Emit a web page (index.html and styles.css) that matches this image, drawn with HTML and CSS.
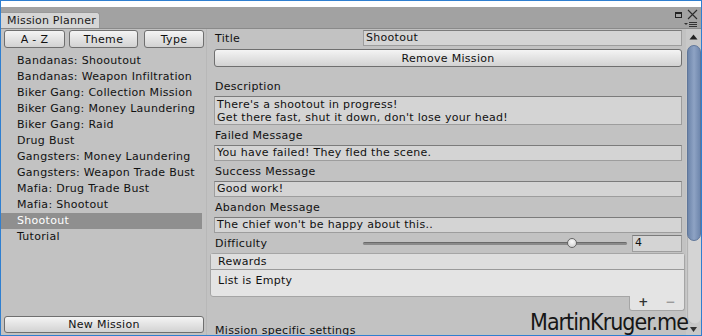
FILE: index.html
```html
<!DOCTYPE html>
<html lang="en">
<head>
    <meta charset="UTF-8">
    <meta name="viewport" content="width=device-width, initial-scale=1.0">
    <title>Mission Planner</title>
    <link rel="stylesheet" href="styles.css">
</head>
<body>
    <div class="window">
        <div class="top-band"></div>
        <div class="header">
            <div class="tab">Mission Planner</div>
            <div class="header-icons">
                <div class="icon-row">
                    <span class="max-icon"></span>
                    <svg width="11" height="11" viewBox="0 0 11 11"><path d="M1 1 L10 10 M10 1 L1 10" stroke="#2b2b2b" stroke-width="1.1" fill="none"/></svg>
                </div>
                <svg class="menu-icon" width="14" height="7" viewBox="0 0 14 7"><path d="M0 2 L4 2 L2 4 Z" fill="#333"/><path d="M5 1.5 H13 M5 3.5 H13 M5 5.5 H13" stroke="#333" stroke-width="1" fill="none"/></svg>
            </div>
        </div>
        <div class="body">
            <div class="left">
                <div class="sort-row">
                    <button class="btn sort-az">A - Z</button>
                    <button class="btn sort-theme">Theme</button>
                    <button class="btn sort-type">Type</button>
                </div>
                <ul class="mission-list">
                    <li>Bandanas: Shooutout</li>
                    <li>Bandanas: Weapon Infiltration</li>
                    <li>Biker Gang: Collection Mission</li>
                    <li>Biker Gang: Money Laundering</li>
                    <li>Biker Gang: Raid</li>
                    <li>Drug Bust</li>
                    <li>Gangsters: Money Laundering</li>
                    <li>Gangsters: Weapon Trade Bust</li>
                    <li>Mafia: Drug Trade Bust</li>
                    <li>Mafia: Shootout</li>
                    <li class="selected">Shootout</li>
                    <li>Tutorial</li>
                </ul>
                <button class="btn new-mission">New Mission</button>
            </div>
            <div class="right">
                <div class="field-row title-row">
                    <span class="label">Title</span>
                    <div class="field">Shootout</div>
                </div>
                <button class="btn remove-btn">Remove Mission</button>
                <div class="label-row desc-label">Description</div>
                <div class="field area">There's a shootout in progress!<br>Get there fast, shut it down, don't lose your head!</div>
                <div class="label-row">Failed Message</div>
                <div class="field">You have failed! They fled the scene.</div>
                <div class="label-row">Success Message</div>
                <div class="field">Good work!</div>
                <div class="label-row">Abandon Message</div>
                <div class="field">The chief won't be happy about this..</div>
                <div class="field-row difficulty-row">
                    <span class="label">Difficulty</span>
                    <div class="slider">
                        <div class="track"></div>
                        <div class="thumb"></div>
                    </div>
                    <div class="field number">4</div>
                </div>
                <div class="rewards">
                    <div class="rewards-head">Rewards</div>
                    <div class="rewards-body">List is Empty</div>
                </div>
                <div class="rewards-foot"><span>+</span><span class="minus">&minus;</span></div>
                <div class="label-row specific">Mission specific settings</div>
            </div>
            <div class="scrollbar">
                <svg class="arrow" width="9" height="6" viewBox="0 0 9 6"><path d="M0.5 5.5 L4.5 0.5 L8.5 5.5 Z" fill="#222"/></svg>
                <div class="scroll-track">
                    <div class="scroll-thumb"></div>
                </div>
                <svg class="arrow" width="7" height="5" viewBox="0 0 7 5"><path d="M0 0 L7 0 L3.5 5 Z" fill="#333"/></svg>
            </div>
        </div>
        <div class="watermark">MartinKruger.me</div>
    </div>
</body>
</html>
```
FILE: styles.css
```css
html,body{
    margin:0;
    height:100%;
    width:100%;
    font-family: "DejaVu Sans", Verdana, sans-serif;
    font-size:11px;
    letter-spacing:0.3px;
    color:#111;
}
.window{
    position:relative;
    box-sizing:border-box;
    width:702px;
    height:336px;
    border:1px solid #2f7fd0;
    display:flex;
    flex-direction:column;
    overflow:hidden;
}
.top-band{
    height:6px;
    background-color:#ffffff;
}
.header{
    height:21px;
    background-color:#a2a2a2;
    border-bottom:1px solid #8a8a8a;
    display:flex;
    justify-content:space-between;
    align-items:flex-end;
}
.tab{
    height:15px;
    line-height:16px;
    padding:0 6px;
    width:86px;
    background-color:#d6d6d6;
    border:1px solid #9a9a9a;
    border-bottom:none;
    border-left:none;
    border-radius:0 3px 0 0;
    white-space:nowrap;
    overflow:hidden;
    color:#1a1a1a;
    letter-spacing:0.2px;
}
.header-icons{
    display:flex;
    flex-direction:column;
    align-items:flex-end;
    padding-right:3px;
    height:21px;
}
.icon-row{
    display:flex;
    align-items:center;
    gap:5px;
    margin-top:2px;
}
.max-icon{
    width:5px;
    height:3px;
    border:1px solid #222;
    border-top-width:2px;
}
.menu-icon{
    margin-top:1px;
}
.body{
    flex:1;
    display:flex;
    background-color:#c2c2c2;
    min-height:0;
}
.left{
    width:205px;
    display:flex;
    flex-direction:column;
    border-right:1px solid #b8b8b8;
}
.btn{
    font-family:inherit;
    font-size:11px;
    letter-spacing:0.3px;
    color:#111;
    height:18px;
    padding:0;
    border:1px solid #6f6f6f;
    border-radius:3px;
    background:linear-gradient(#f4f4f4, #d2d2d2);
    line-height:15px;
}
.sort-row{
    display:flex;
    padding:1px 0 0 3px;
}
.sort-az{ width:61px; }
.sort-theme{ width:69px; margin-left:4px; }
.sort-type{ width:60px; margin-left:6px; }
.mission-list{
    list-style:none;
    margin:5px 0 0 0;
    padding:0;
    flex:1;
}
.mission-list li{
    height:16px;
    line-height:16px;
    padding-left:16px;
    margin-right:4px;
    white-space:nowrap;
}
.mission-list li.selected{
    background-color:#8f8f8f;
    color:#ffffff;
}
.new-mission{
    margin:0 0 2px 3px;
    width:200px;
    height:17px;
}
.right{
    flex:1;
    padding:1px 4px 0 7px;
    display:flex;
    flex-direction:column;
    min-width:0;
}
.right > *{
    flex-shrink:0;
}
.field-row{
    display:flex;
    align-items:center;
}
.label{
    width:148px;
    flex-shrink:0;
    padding-left:1px;
}
.field{
    box-sizing:border-box;
    height:16px;
    line-height:14px;
    background-color:#d4d4d4;
    border:1px solid #9d9d9d;
    border-top-color:#7b7b7b;
    padding:0 2px;
    white-space:nowrap;
    overflow:hidden;
}
.title-row .field{
    flex:1;
}
.remove-btn{
    margin-top:3px;
    height:18px;
}
.label-row{
    height:20px;
    line-height:21px;
    padding-left:1px;
}
.desc-label{
    margin-top:9px;
}
.area{
    height:29px;
    line-height:13px;
    padding-top:1px;
}
.difficulty-row{
    margin-top:1px;
    height:18px;
}
.slider{
    position:relative;
    flex:1;
    height:18px;
    margin-right:5px;
}
.track{
    position:absolute;
    left:0;
    right:0;
    top:8px;
    height:3px;
    border-radius:2px;
    background-color:#8a8a8a;
    border-top:1px solid #6a6a6a;
    box-sizing:border-box;
}
.thumb{
    position:absolute;
    left:204px;
    top:4px;
    width:10px;
    height:10px;
    border-radius:50%;
    border:1px solid #666;
    background:radial-gradient(circle at 50% 35%, #fafafa, #c8c8c8);
    box-sizing:border-box;
}
.number{
    width:50px;
    height:17px;
}
.rewards{
    margin:1px -3px 0 -4px;
    border:1px solid #a5a5a5;
    border-radius:3px 3px 0 3px;
    background-color:#e4e4e4;
}
.rewards-head{
    height:15px;
    line-height:15px;
    padding-left:7px;
    background-color:#dedede;
    border-bottom:1px solid #9a9a9a;
}
.rewards-body{
    height:26px;
    line-height:22px;
    padding-left:7px;
}
.rewards-foot{
    align-self:flex-end;
    margin-right:-3px;
    margin-top:-1px;
    width:54px;
    height:14px;
    line-height:13px;
    background-color:#e4e4e4;
    border:1px solid #a5a5a5;
    border-top:none;
    border-radius:0 0 3px 3px;
    display:flex;
    justify-content:space-around;
    font-weight:bold;
    font-size:12px;
    color:#333;
}
.rewards-foot .minus{
    color:#9a9a9a;
}
.specific{
    margin-top:9px;
}
.scrollbar{
    width:15px;
    display:flex;
    flex-direction:column;
    align-items:center;
    background-color:#c8c8c8;
    padding-top:5px;
}
.scroll-track{
    flex:1;
    width:14px;
    margin-top:5px;
    border-radius:7px;
    background-color:#d4d4d4;
    box-shadow:inset 1px 0 1px #b0b0b0;
    margin-bottom:3px;
}
.scroll-thumb{
    height:196px;
    border-radius:7px;
    background:linear-gradient(90deg, #6d85aa, #8ea3c4 50%, #6f87ad);
    border:1px solid #5f769a;
    box-sizing:border-box;
}
.scrollbar .arrow:last-child{
    margin-bottom:3px;
}
.watermark{
    position:absolute;
    right:13px;
    bottom:4px;
    font-family:"DejaVu Sans Condensed", "DejaVu Sans", sans-serif;
    font-stretch:condensed;
    font-size:23px;
    line-height:18px;
    letter-spacing:-1px;
    color:#161616;
}
```
